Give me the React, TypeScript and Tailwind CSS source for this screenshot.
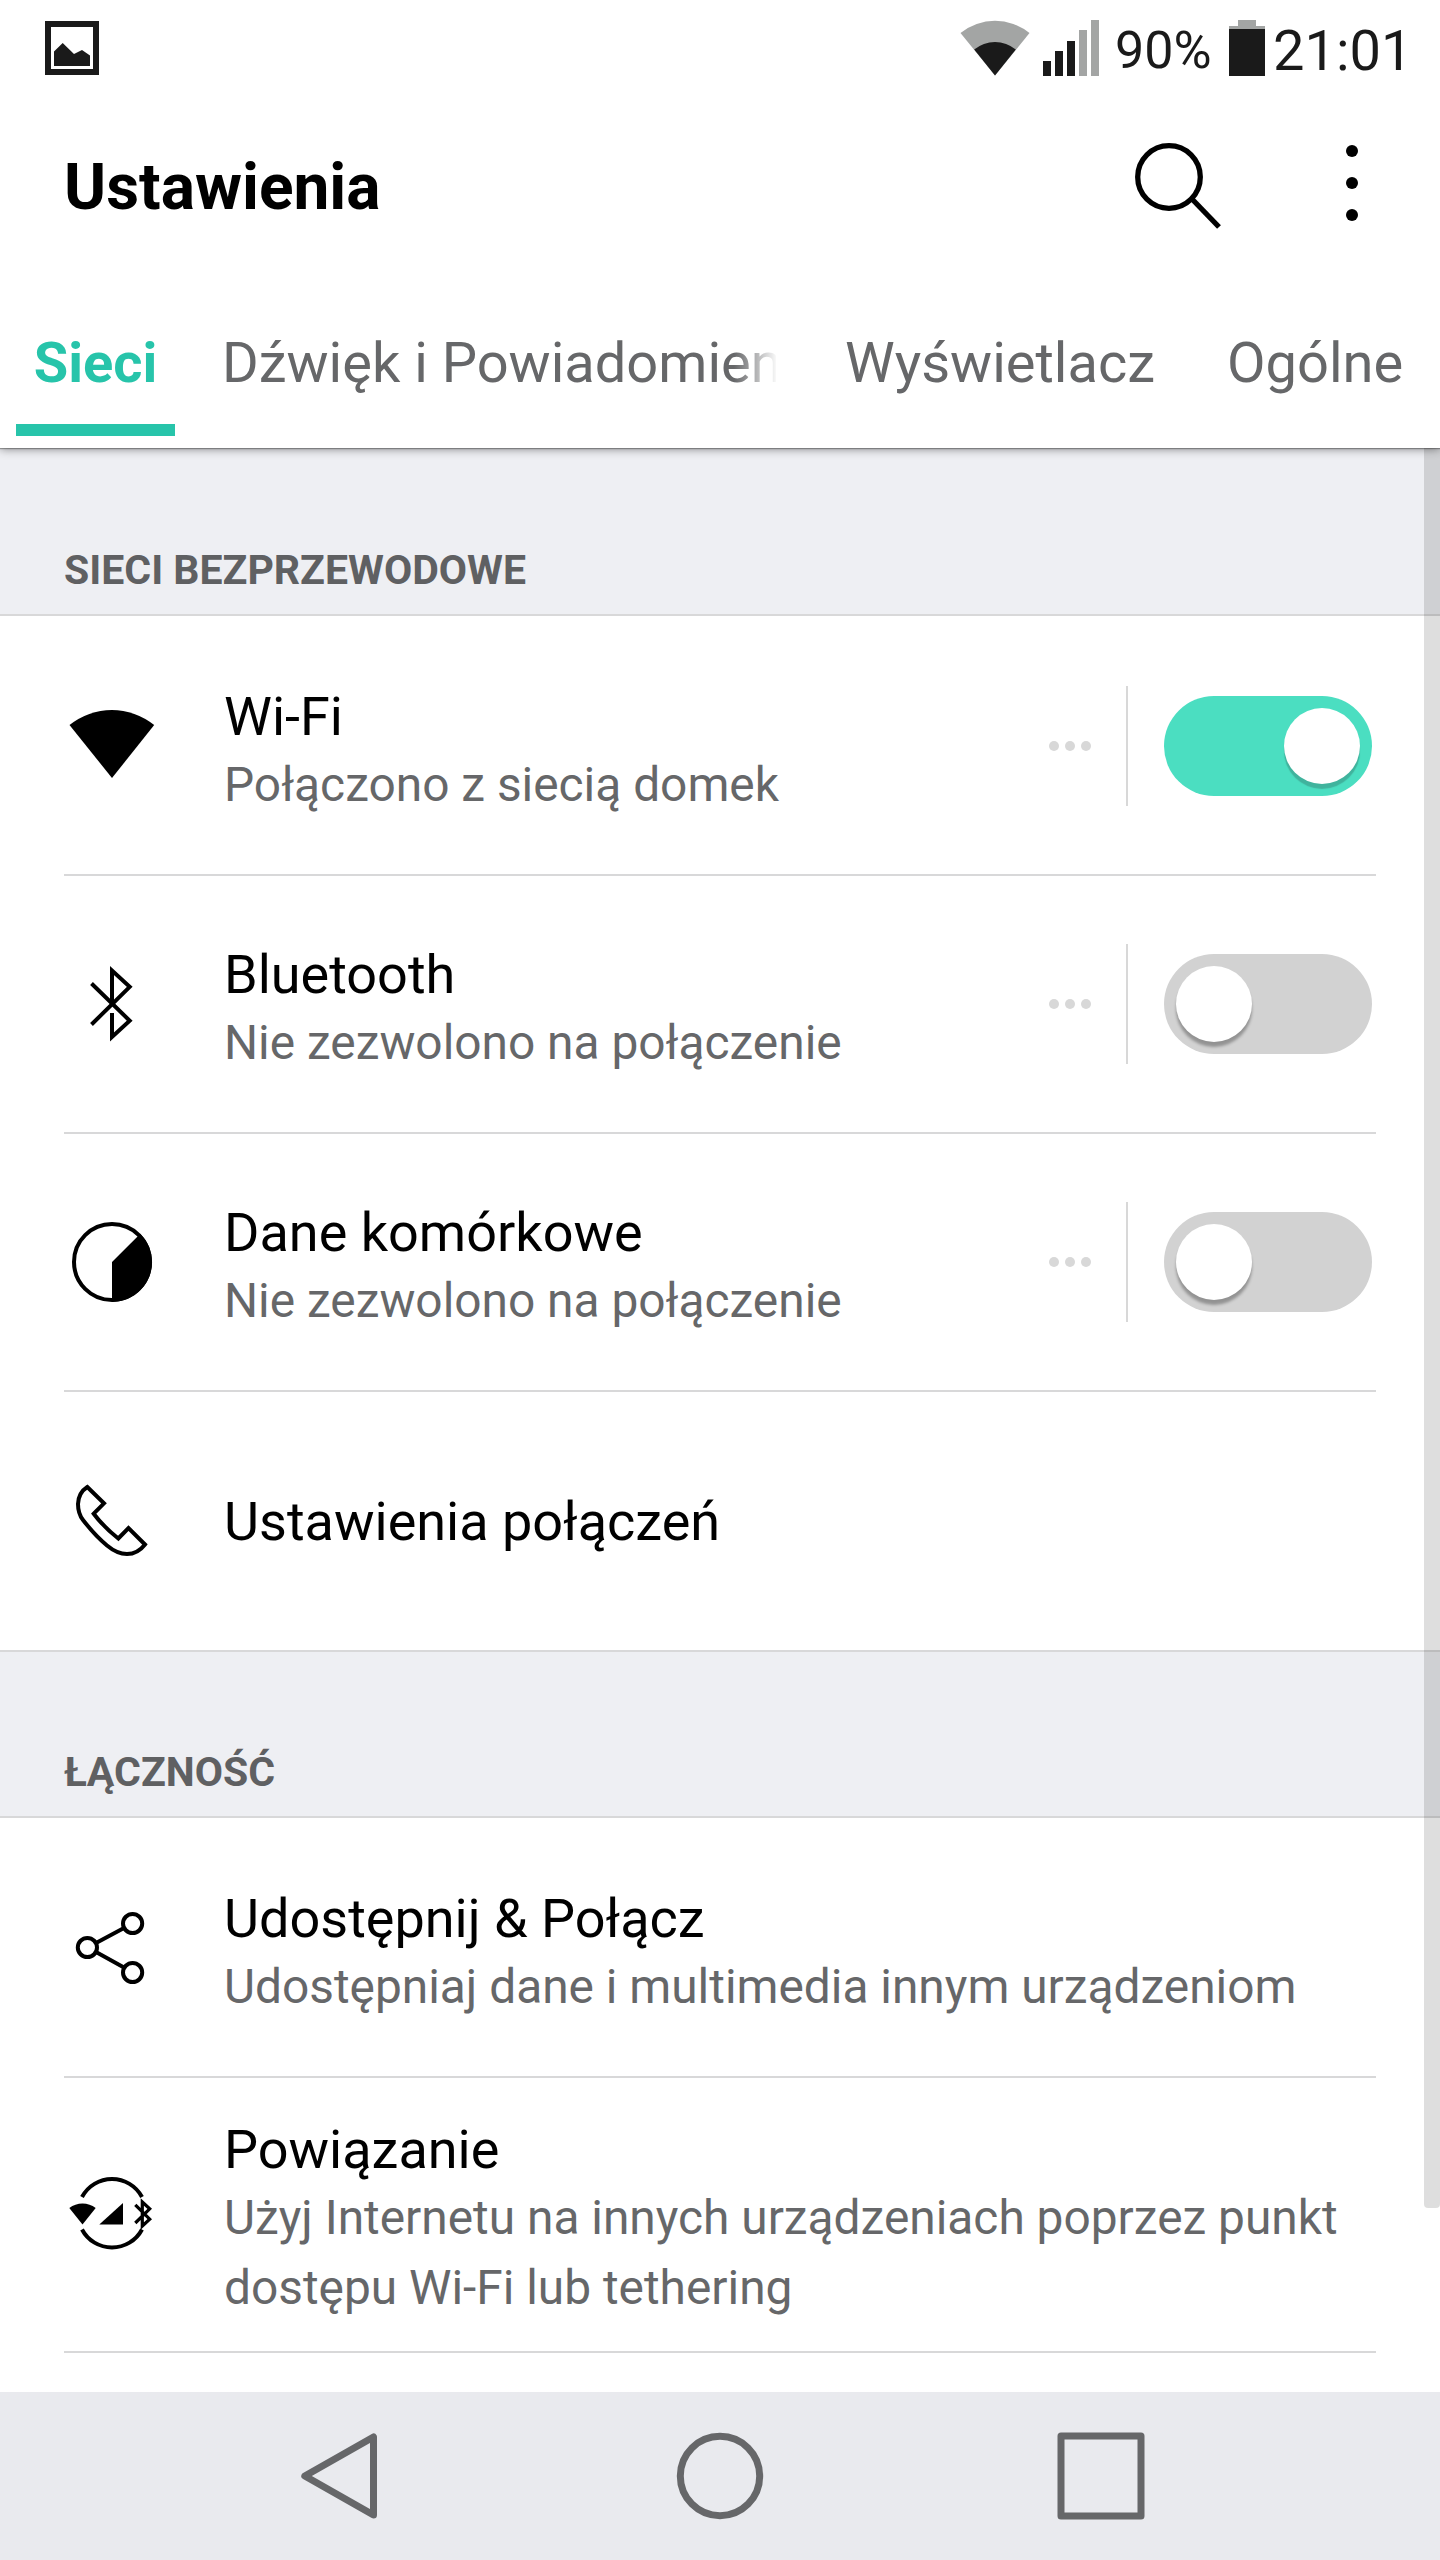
import { useState } from 'react';
import type { ReactNode } from 'react';
import clsx from 'clsx';

// Status bar icons
const PictureIcon = () => (
  <svg width="54" height="54" viewBox="0 0 54 54">
    <rect x="3" y="3" width="48" height="48" fill="none" stroke="#1a1a1a" strokeWidth="6" />
    <path d="M9 30.5L17.7 22L29 33L37 29L45 34.5V45H9Z" fill="#1a1a1a" />
  </svg>
);

const StatusWifi = () => (
  <svg width="70" height="56" viewBox="0 0 70 56">
    <path d="M.5 13A55 55 0 0 1 69.5 13L35 55.5Z" fill="#a3a5a4" />
    <path d="M14.2 29.5A32.5 32.5 0 0 1 55.8 29.5L35 55.5Z" fill="#1a1a1a" />
  </svg>
);

const SignalBars = () => (
  <div className="flex h-14 items-end gap-1">
    <span className="h-[15px] w-2 bg-[#1a1a1a]" />
    <span className="h-[25px] w-2 bg-[#1a1a1a]" />
    <span className="h-[35px] w-2 bg-[#1a1a1a]" />
    <span className="h-[46px] w-2 bg-[#a3a5a4]" />
    <span className="h-14 w-2 bg-[#a3a5a4]" />
  </div>
);

const Battery = () => (
  <div className="flex w-9 flex-col items-center">
    <span className="h-1.5 w-[18px] bg-[#a3a5a4]" />
    <span className="h-[3px] w-full bg-[#a3a5a4]" />
    <span className="h-[47px] w-full bg-[#1a1a1a]" />
  </div>
);

// Row icons share a 96x96 box
const IconBox = ({ children }: { children: ReactNode }) => (
  <svg
    className="shrink-0"
    width="96"
    height="96"
    viewBox="0 0 96 96"
    fill="none"
    stroke="#000"
    strokeWidth="4"
  >
    {children}
  </svg>
);

const WifiIcon = () => (
  <IconBox>
    <path d="M5.5 27A67.5 67.5 0 0 1 90.2 27L48 80Z" fill="#000" stroke="none" />
  </IconBox>
);

const BluetoothIcon = () => (
  <IconBox>
    <path d="M27.5 27.5L65.7 64.7L48 81V57" />
    <path d="M27.5 68.5L65.7 30.8L48 14.5V48" />
  </IconBox>
);

const DataIcon = () => (
  <IconBox>
    <circle cx="48" cy="48" r="38" />
    <path d="M48 48V88A40 40 0 0 0 76.3 19.7Z" fill="#000" stroke="none" />
  </IconBox>
);

const PhoneIcon = () => (
  <IconBox>
    <path d="M23.3 14L40 30.3L29.7 40.7C36 49 46 59 54.3 65.5L64.5 55L81 71.5C76 78 70 81 63 81C55 81 49 77.5 43 72.5C34 65 26 56 19 47C15.5 42.5 14 38 14 31C14.3 23 17 18 23.3 14Z" />
  </IconBox>
);

const ShareIcon = () => (
  <IconBox>
    <circle cx="23.4" cy="47.5" r="9.6" />
    <circle cx="68.6" cy="23.5" r="9.6" />
    <circle cx="68.6" cy="72.5" r="9.6" />
    <path d="M32 43L60 28M32 52L60 67.5" />
  </IconBox>
);

const TetheringIcon = () => (
  <IconBox>
    <path d="M18 31A34 34 0 0 1 78 31M18 63.5A34 34 0 0 0 78 63.5" />
    <path d="M5.3 42A21.5 21.5 0 0 1 31.7 42L18.5 58.5Z" fill="#000" stroke="none" />
    <path d="M35.3 58.5H59V37Z" fill="#000" stroke="none" />
    <path
      d="M71.3 38.8L85.7 53.2L78.3 60V36L85.7 42.8L71.3 57"
      strokeWidth="3.2"
    />
  </IconBox>
);

const Switch = ({ on, onChange }: { on: boolean; onChange: () => void }) => (
  <button
    onClick={onChange}
    role="switch"
    aria-checked={on}
    className={clsx(
      'flex h-[100px] w-[208px] items-center rounded-full px-3',
      on ? 'justify-end bg-[#4bdec1]' : 'justify-start bg-[#d2d2d2]'
    )}
  >
    <span
      className={clsx(
        'size-[76px] rounded-full bg-white',
        on
          ? 'shadow-[0_5px_1px_#40b39d]'
          : 'shadow-[0_5px_3px_rgba(0,0,0,0.3)]'
      )}
    />
  </button>
);

type RowProps = {
  icon: ReactNode;
  title: string;
  summary?: string;
  on?: boolean;
  onToggle?: () => void;
  className?: string;
};

const Row = ({ icon, title, summary, on, onToggle, className }: RowProps) => (
  <div
    className={clsx('mx-16 flex items-center border-[#d8d8d9]', className)}
  >
    {icon}
    <div className={clsx('ml-16 flex-1', summary ? 'pt-3' : 'pt-0.5')}>
      <div className="text-[54px] leading-[66px] text-black">{title}</div>
      {summary && (
        <div className="text-[47.83px] leading-[70px] text-[#666769]">
          {summary}
        </div>
      )}
    </div>
    {onToggle && (
      <div className="mr-1 flex items-center">
        <div className="mr-[35px] flex gap-1.5">
          <span className="size-2.5 rounded-full bg-[#d8d8d8]" />
          <span className="size-2.5 rounded-full bg-[#d8d8d8]" />
          <span className="size-2.5 rounded-full bg-[#d8d8d8]" />
        </div>
        <div className="mr-9 h-[120px] w-0.5 bg-[#d8d8d8]" />
        <Switch on={!!on} onChange={onToggle} />
      </div>
    )}
  </div>
);

const SectionHeader = ({
  title,
  className,
}: {
  title: string;
  className?: string;
}) => (
  <div
    className={clsx(
      'flex h-[168px] items-end border-b-2 border-[#d8d8d9] bg-[#eeeff3] px-16 pb-5',
      className
    )}
  >
    <h2 className="text-[41px] leading-[48px] font-bold text-[#5f6062]">
      {title}
    </h2>
  </div>
);

export default function App() {
  const [wifi, setWifi] = useState(true);
  const [bluetooth, setBluetooth] = useState(false);
  const [data, setData] = useState(false);

  return (
    <div className="relative flex h-[2560px] w-[1440px] flex-col overflow-hidden bg-white font-[Roboto,sans-serif]">
      <div className="flex h-24 shrink-0 items-start justify-between pt-5 pr-[34px] pl-[45px] text-[#1a1a1a]">
        <div className="pt-px">
          <PictureIcon />
        </div>
        <div className="flex">
          <StatusWifi />
          <div className="ml-[13px]">
            <SignalBars />
          </div>
          <span className="ml-4 w-[114px] text-[52px] leading-[62px]">90%</span>
          <Battery />
          <span className="ml-2 w-[133px] text-[56px] leading-[62px]">
            21:01
          </span>
        </div>
      </div>

      <header className="flex h-[180px] shrink-0 items-center justify-between pr-[82px] pl-16">
        <h1 className="pt-1 text-[64px] leading-[76px] font-bold text-black">
          Ustawienia
        </h1>
        <div className="flex items-center">
          <svg width="88" height="88" viewBox="0 0 88 88" fill="none" stroke="#000">
            <circle cx="35" cy="35" r="31.3" strokeWidth="5.3" />
            <path d="M58 57L85 85" strokeWidth="5.3" />
          </svg>
          <div className="ml-[124px] flex flex-col gap-5 pb-1.5">
            <span className="size-3 rounded-full bg-black" />
            <span className="size-3 rounded-full bg-black" />
            <span className="size-3 rounded-full bg-black" />
          </div>
        </div>
      </header>

      <nav className="z-10 flex h-[172px] shrink-0 pl-4 text-[56px] leading-[66px] text-[#666769] shadow-[0_1px_9px_rgba(0,0,0,0.45),0_1px_1px_rgba(0,0,0,0.3)] [clip-path:inset(0_0_-16px_0)]">
        <div className="flex h-40 w-[159px] justify-center border-b-12 border-[#27c4aa] pt-[54px] font-bold text-[#27c4aa]">
          Sieci
        </div>
        {/* long label fades out at its right edge */}
        <div className="ml-[47px] w-[554px] overflow-hidden pt-[54px] whitespace-nowrap [mask-image:linear-gradient(to_right,#000_512px,transparent_556px)]">
          Dźwięk i Powiadomienia
        </div>
        <div className="ml-[69px] w-[309px] pt-[54px] whitespace-nowrap">
          Wyświetlacz
        </div>
        <div className="ml-[73px] pt-[54px]">Ogólne</div>
      </nav>

      <main className="flex-1">
        <SectionHeader title="SIECI BEZPRZEWODOWE" />
        <Row
          icon={<WifiIcon />}
          title="Wi-Fi"
          summary="Połączono z siecią domek"
          on={wifi}
          onToggle={() => setWifi(!wifi)}
          className="h-[260px] border-b-2 pt-0.5"
        />
        <Row
          icon={<BluetoothIcon />}
          title="Bluetooth"
          summary="Nie zezwolono na połączenie"
          on={bluetooth}
          onToggle={() => setBluetooth(!bluetooth)}
          className="h-[258px] border-b-2"
        />
        <Row
          icon={<DataIcon />}
          title="Dane komórkowe"
          summary="Nie zezwolono na połączenie"
          on={data}
          onToggle={() => setData(!data)}
          className="h-[258px] border-b-2"
        />
        <Row
          icon={<PhoneIcon />}
          title="Ustawienia połączeń"
          className="h-[258px]"
        />

        <SectionHeader title="ŁĄCZNOŚĆ" className="border-t-2" />
        <Row
          icon={<ShareIcon />}
          title="Udostępnij & Połącz"
          summary="Udostępniaj dane i multimedia innym urządzeniom"
          className="h-[260px] border-b-2 pt-0.5"
        />
        <Row
          icon={<TetheringIcon />}
          title="Powiązanie"
          summary="Użyj Internetu na innych urządzeniach poprzez punkt dostępu Wi-Fi lub tethering"
          className="h-[275px] border-b-2 pb-px"
        />
      </main>

      <footer className="flex h-[168px] shrink-0 items-center bg-[#e9eaee] pl-[300px]">
        <svg width="78" height="88" viewBox="0 0 78 88" fill="none" stroke="#666769">
          <path d="M73.5 5V83L4.8 44Z" strokeWidth="7" strokeLinejoin="round" />
        </svg>
        <svg className="ml-[298px]" width="88" height="88" viewBox="0 0 88 88" fill="none" stroke="#666769">
          <circle cx="44" cy="44" r="39.7" strokeWidth="7" />
        </svg>
        <svg className="ml-[293px]" width="88" height="88" viewBox="0 0 88 88" fill="none" stroke="#666769">
          <rect x="4" y="4" width="80" height="80" strokeWidth="7" strokeLinejoin="round" />
        </svg>
      </footer>

      {/* scroll indicator, drawn over the list */}
      <div className="absolute top-[448px] right-0 h-[1760px] w-4 rounded-b bg-black/13" />
    </div>
  );
}
